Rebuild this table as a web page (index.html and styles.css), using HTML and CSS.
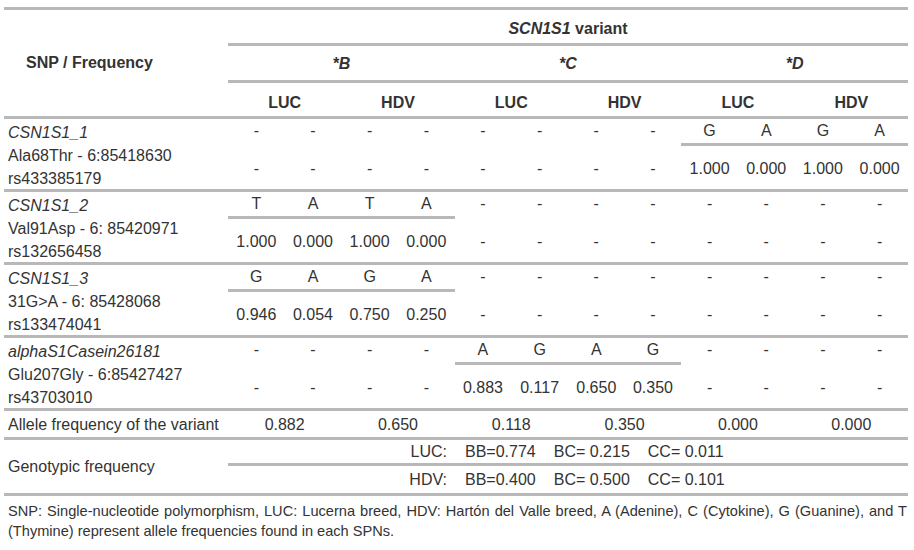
FILE: index.html
```html
<!DOCTYPE html>
<html lang="en">
<head>
<meta charset="utf-8">
<title>SCN1S1 variant</title>
<link rel="stylesheet" href="styles.css">
</head>
<body>
<div class="page">
<table class="snp">
<colgroup><col class="c0"><col class="cd" span="12"></colgroup>
<thead>
<tr class="h1"><th class="corner" rowspan="3">SNP / Frequency</th><th class="top" colspan="12"><i>SCN1S1</i> variant</th></tr>
<tr class="h2"><th colspan="4"><i>*B</i></th><th colspan="4"><i>*C</i></th><th colspan="4"><i>*D</i></th></tr>
<tr class="h3"><th colspan="2">LUC</th><th colspan="2">HDV</th><th colspan="2">LUC</th><th colspan="2">HDV</th><th colspan="2">LUC</th><th colspan="2">HDV</th></tr>
</thead>
<tbody>
<tr class="ra">
<td class="name" rowspan="2"><div class="lines"><i>CSN1S1_1</i><br>Ala68Thr - 6:85418630<br>rs433385179</div></td>
<td>-</td><td>-</td><td>-</td><td>-</td><td>-</td><td>-</td><td>-</td><td>-</td>
<td class="al">G</td><td class="al">A</td><td class="al">G</td><td class="al">A</td>
</tr>
<tr class="rb">
<td>-</td><td>-</td><td>-</td><td>-</td><td>-</td><td>-</td><td>-</td><td>-</td>
<td>1.000</td><td>0.000</td><td>1.000</td><td>0.000</td>
</tr>
<tr class="ra">
<td class="name" rowspan="2"><div class="lines"><i>CSN1S1_2</i><br>Val91Asp - 6: 85420971<br>rs132656458</div></td>
<td class="al">T</td><td class="al">A</td><td class="al">T</td><td class="al">A</td>
<td>-</td><td>-</td><td>-</td><td>-</td><td>-</td><td>-</td><td>-</td><td>-</td>
</tr>
<tr class="rb">
<td>1.000</td><td>0.000</td><td>1.000</td><td>0.000</td>
<td>-</td><td>-</td><td>-</td><td>-</td><td>-</td><td>-</td><td>-</td><td>-</td>
</tr>
<tr class="ra">
<td class="name" rowspan="2"><div class="lines"><i>CSN1S1_3</i><br>31G&gt;A - 6: 85428068<br>rs133474041</div></td>
<td class="al">G</td><td class="al">A</td><td class="al">G</td><td class="al">A</td>
<td>-</td><td>-</td><td>-</td><td>-</td><td>-</td><td>-</td><td>-</td><td>-</td>
</tr>
<tr class="rb">
<td>0.946</td><td>0.054</td><td>0.750</td><td>0.250</td>
<td>-</td><td>-</td><td>-</td><td>-</td><td>-</td><td>-</td><td>-</td><td>-</td>
</tr>
<tr class="ra">
<td class="name" rowspan="2"><div class="lines"><i>alphaS1Casein26181</i><br>Glu207Gly - 6:85427427<br>rs43703010</div></td>
<td>-</td><td>-</td><td>-</td><td>-</td>
<td class="al">A</td><td class="al">G</td><td class="al">A</td><td class="al">G</td>
<td>-</td><td>-</td><td>-</td><td>-</td>
</tr>
<tr class="rb">
<td>-</td><td>-</td><td>-</td><td>-</td>
<td>0.883</td><td>0.117</td><td>0.650</td><td>0.350</td>
<td>-</td><td>-</td><td>-</td><td>-</td>
</tr>
<tr class="af">
<td class="lbl">Allele frequency of the variant</td>
<td colspan="2">0.882</td><td colspan="2">0.650</td><td colspan="2">0.118</td><td colspan="2">0.350</td><td colspan="2">0.000</td><td colspan="2">0.000</td>
</tr>
<tr class="g1">
<td class="lbl gl" rowspan="2">Genotypic frequency</td>
<td class="gv" colspan="12"><div class="gf"><span class="gk">LUC:</span><span>BB=0.774</span><span>BC= 0.215</span><span>CC= 0.011</span></div></td>
</tr>
<tr class="g2">
<td class="gv" colspan="12"><div class="gf"><span class="gk">HDV:</span><span>BB=0.400</span><span>BC= 0.500</span><span>CC= 0.101</span></div></td>
</tr>
</tbody>
</table>
<p class="note">SNP: Single-nucleotide polymorphism, LUC: Lucerna breed, HDV: Hartón del Valle breed, A (Adenine), C (Cytokine), G (Guanine), and T (Thymine) represent allele frequencies found in each SPNs.</p>
</div>
</body>
</html>
```

FILE: styles.css
```css
html, body {
  margin: 0;
  padding: 0;
  background: #ffffff;
}

body {
  font-family: "Liberation Sans", Arial, sans-serif;
  font-size: 16px;
  color: #333333;
}

.page {
  padding: 7px 0 0 4px;
}

.snp {
  width: 904px;
  table-layout: fixed;
  border-collapse: separate;
  border-spacing: 0;
}

.c0 { width: 224px; }
.cd { width: 56.666px; }

.snp th,
.snp td {
  padding: 0;
  text-align: center;
  white-space: nowrap;
}

.snp th {
  font-weight: bold;
}

.corner {
  text-align: left !important;
  padding-left: 22px !important;
  border-top: 3px solid #b8b8b8;
  border-bottom: 3px solid #b8b8b8;
  vertical-align: middle;
}

.h1 th.top {
  border-top: 3px solid #b8b8b8;
  border-bottom: 3px solid #b8b8b8;
  padding-top: 4px;
  line-height: 29px;
}

.h2 th {
  border-bottom: 3px solid #b8b8b8;
  padding-top: 2px;
  line-height: 32px;
}

.h3 th {
  border-bottom: 3px solid #b8b8b8;
  padding-top: 6px;
  line-height: 27px;
}

.name {
  text-align: left !important;
  vertical-align: top;
  padding: 2px 0 0 4px !important;
  border-bottom: 3px solid #b8b8b8;
}

.lines {
  height: 68px;
  line-height: 23px;
}

.ra td {
  line-height: 24px;
  border-bottom: 3px solid transparent;
}

.ra td.name {
  line-height: 23px;
  border-bottom-color: #b8b8b8;
}

.ra td.al {
  border-bottom-color: #b8b8b8;
}

.rb td {
  padding-top: 2px;
  line-height: 41px;
  border-bottom: 3px solid #b8b8b8;
}

.lbl {
  text-align: left !important;
  padding-left: 4px !important;
}

.af td {
  padding-top: 1px;
  line-height: 25px;
  border-bottom: 3px solid #b8b8b8;
}

.gl {
  vertical-align: middle;
  line-height: 23px;
  border-bottom: 3px solid #b8b8b8;
}

.g1 td.gv {
  line-height: 23px;
  border-bottom: 3px solid #b8b8b8;
}

.g2 td.gv {
  line-height: 27px;
  border-bottom: 3px solid #b8b8b8;
}

.gf {
  display: flex;
  gap: 18px;
}

.gk {
  width: 219px;
  text-align: right;
}

.note {
  margin: 0 0 0 4px;
  width: 899px;
  padding-top: 5px;
  font-size: 14.6px;
  line-height: 20px;
  text-align: justify;
}
```
